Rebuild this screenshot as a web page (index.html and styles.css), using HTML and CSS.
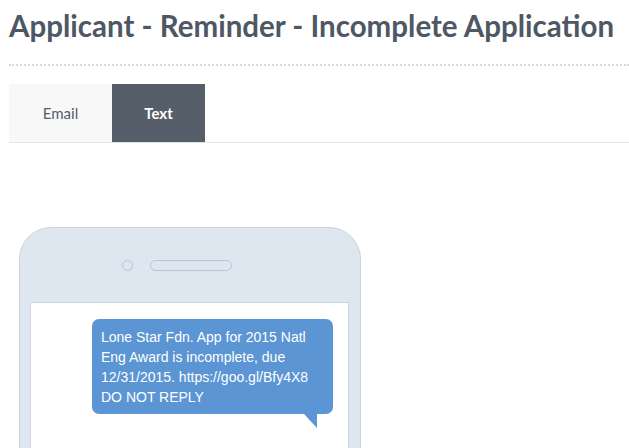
FILE: index.html
```html
<!DOCTYPE html>
<html lang="en">
<head>
    <meta charset="UTF-8">
    <meta name="viewport" content="width=device-width, initial-scale=1.0">
    <title>Applicant - Reminder - Incomplete Application</title>
    <link rel="stylesheet" href="styles.css">
</head>
<body>

    <div class="page">
        <h1 class="title">Applicant - Reminder - Incomplete Application</h1>

        <div class="tabs">
            <div class="tab">Email</div>
            <div class="tab active">Text</div>
        </div>

        <div class="phone">
            <div class="phone-top">
                <span class="camera"></span>
                <span class="speaker"></span>
            </div>
            <div class="screen">
                <div class="bubble">
                    Lone Star Fdn. App for 2015 Natl Eng Award is incomplete, due 12/31/2015. https://goo.gl/Bfy4X8 DO NOT REPLY
                </div>
            </div>
        </div>
    </div>

</body>
</html>
```

FILE: styles.css
```css
body {
    font-family: "Lato", "Open Sans", sans-serif;
    background-color: #ffffff;
    margin: 0;
    padding: 0;
    overflow: hidden;
}

.page {
    padding-left: 9px;
}

.title {
    margin: 0;
    padding: 8px 0 20px 0;
    font-size: 29.5px;
    line-height: 36px;
    font-weight: 700;
    color: #4e5864;
    border-bottom: 2px dotted #d9d9d9;
    white-space: nowrap;
}

.tabs {
    display: flex;
    margin-top: 18px;
    border-bottom: 1px solid #e4e4e4;
}

.tab {
    height: 58px;
    line-height: 58px;
    font-size: 15px;
    color: #555e69;
    background-color: #f8f8f8;
    text-align: center;
    width: 103px;
}

.tab.active {
    width: 93px;
    background-color: #555e69;
    color: #ffffff;
    font-weight: 700;
}

.phone {
    margin: 84px 0 0 10px;
    width: 340px;
    height: 260px;
    background-color: #dee6ef;
    border: 1px solid #c9d3df;
    border-radius: 32px 32px 0 0;
}

.phone-top {
    height: 74px;
    display: flex;
    align-items: center;
    padding-left: 102px;
    gap: 17px;
}

.camera {
    width: 9px;
    height: 9px;
    border: 1px solid #b9c4d1;
    border-radius: 50%;
}

.speaker {
    width: 80px;
    height: 9px;
    border: 1px solid #b9c4d1;
    border-radius: 6px;
}

.screen {
    margin: 0 11px 0 10px;
    height: 200px;
    background-color: #ffffff;
    border: 1px solid #cad4df;
    padding: 16px 15px 0 61px;
}

.bubble {
    position: relative;
    background-color: #5b95d3;
    color: #ffffff;
    font-family: "Liberation Sans", Arial, sans-serif;
    font-size: 14px;
    line-height: 20px;
    padding: 8px 9px 7px 9px;
    border-radius: 7px;
}

.bubble::after {
    content: "";
    position: absolute;
    top: 100%;
    right: 16px;
    width: 0;
    height: 0;
    border-top: 14px solid #5b95d3;
    border-left: 13px solid transparent;
}
```
